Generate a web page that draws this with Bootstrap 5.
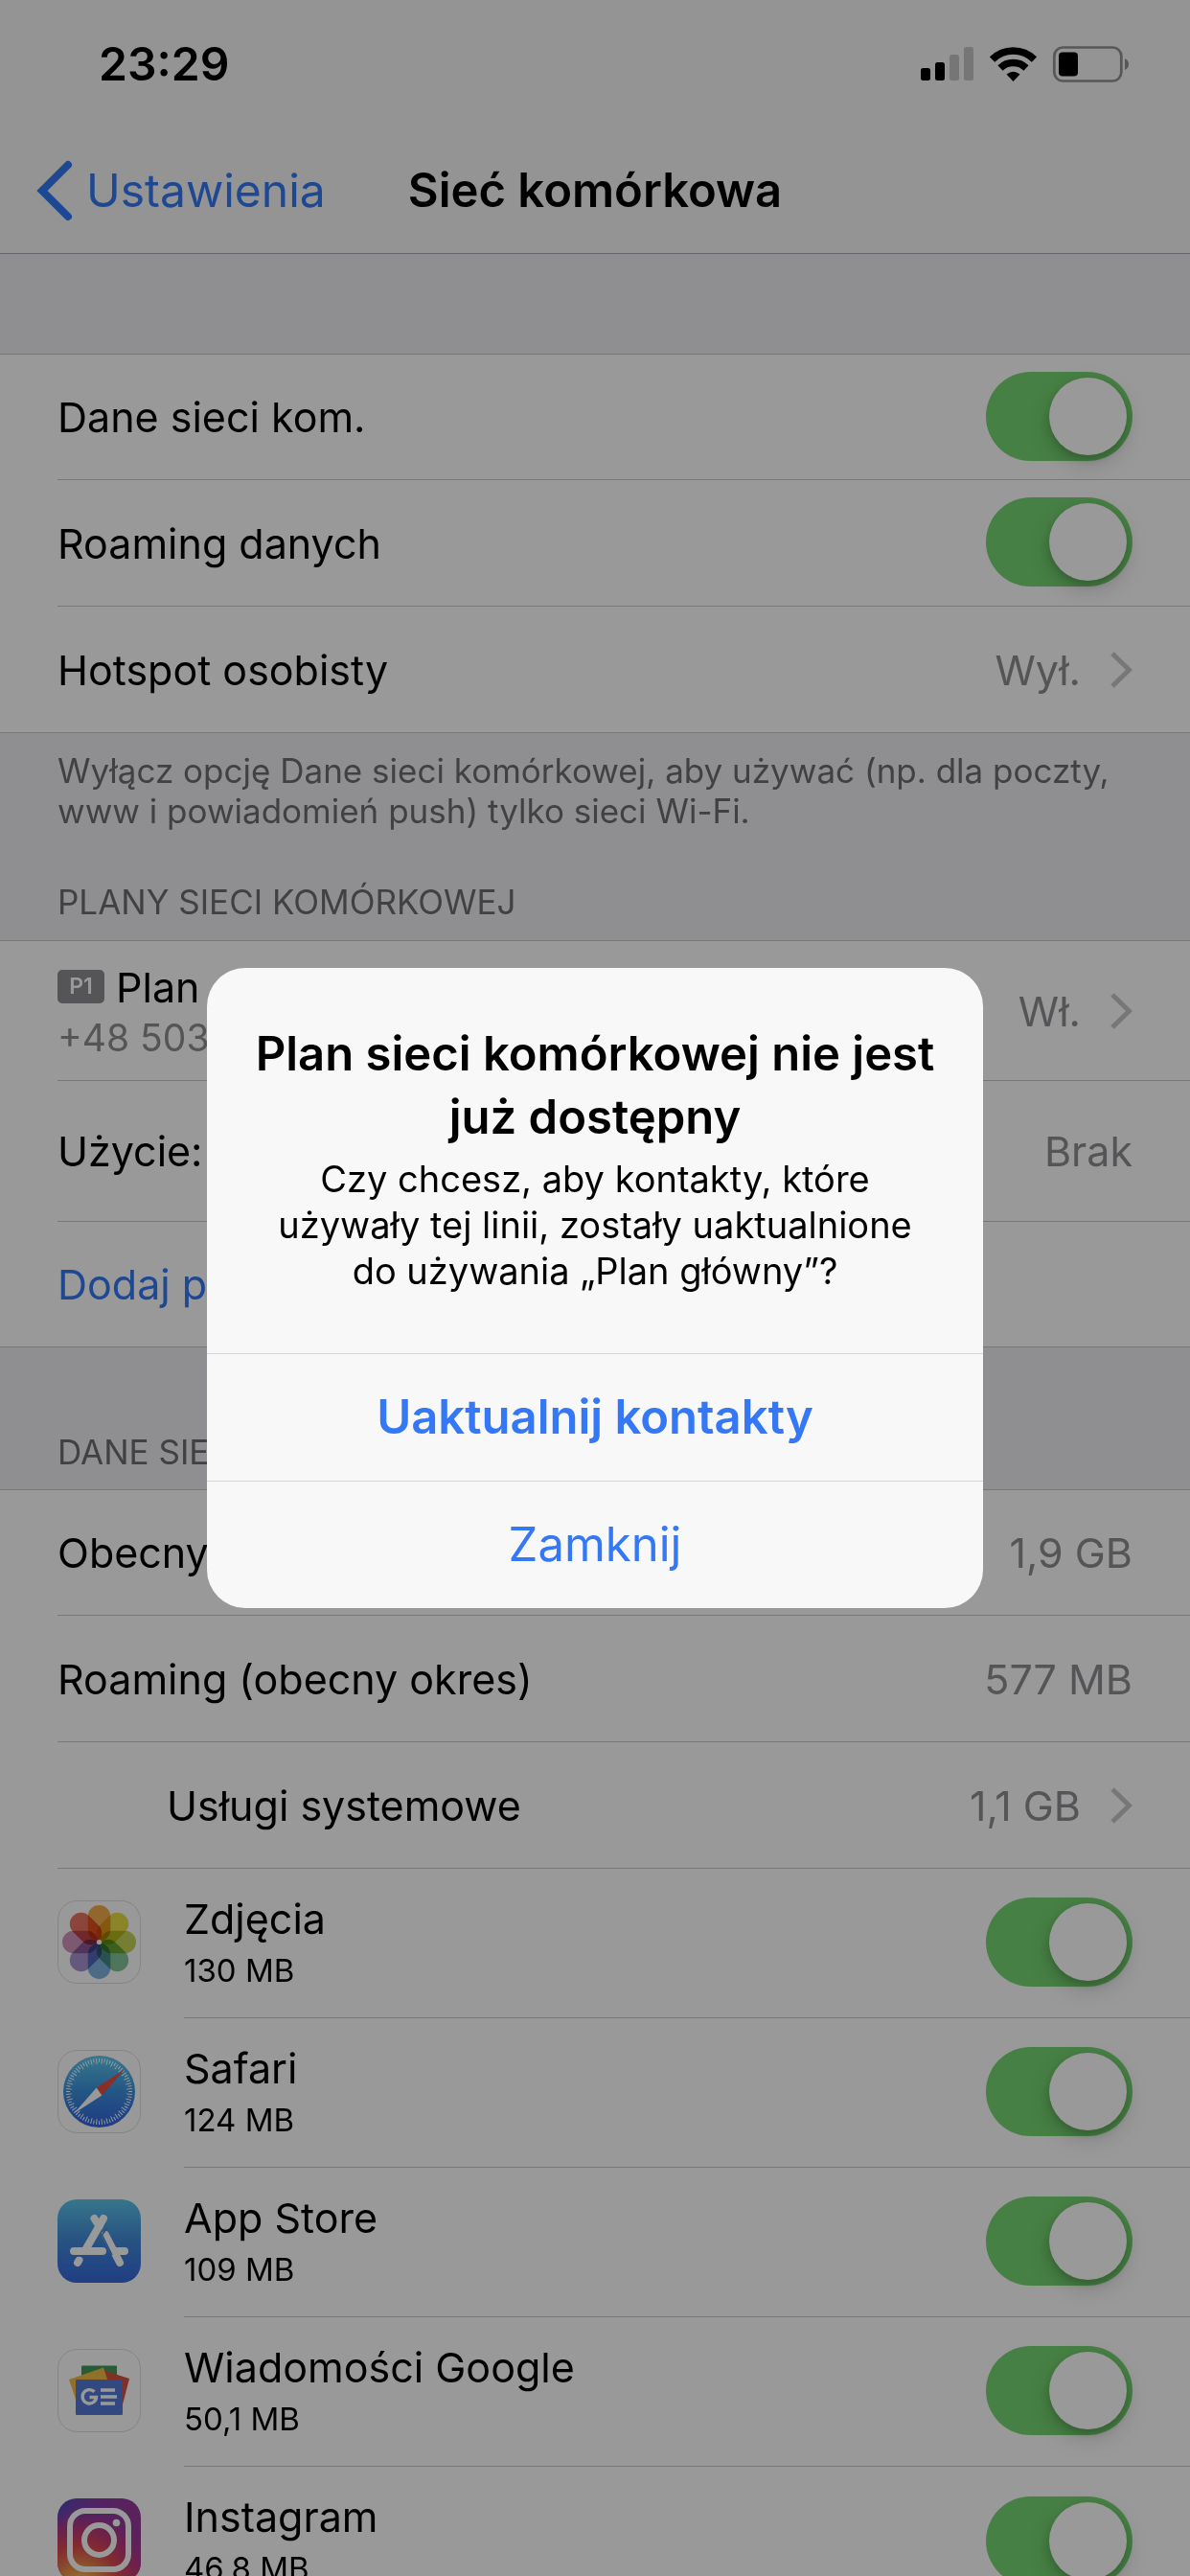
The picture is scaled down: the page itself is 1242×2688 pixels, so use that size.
<!DOCTYPE html>
<html lang="pl">
<head>
<meta charset="utf-8">
<meta name="viewport" content="width=device-width, initial-scale=1">
<title>Sieć komórkowa</title>
<link href="https://cdn.jsdelivr.net/npm/bootstrap@5.3.0/dist/css/bootstrap.min.css" rel="stylesheet">
<style>
  body { font-family: Inter, "Noto Sans", sans-serif; font-size: 43px; line-height: 58px; color: #000; background: #efeff4; }
  a { color: #3478f6; }
  .top-area { background: #f7f7f7; border-bottom: 1px solid #a9a9ad; }
  .status-bar { height: 134px; padding: 0 63px 0 103px; font-size: 48px; }
  .nav-bar { height: 130px; padding: 0 38px; display: grid; grid-template-columns: 1fr auto 1fr; font-size: 49px; }
  .back-link { font-size: 48px; gap: 12px; }
  .spacer-top { height: 104px; }
  .settings-group { --line: #c8c7cc; border-top: 1px solid var(--line); border-bottom: 1px solid var(--line); border-radius: 0; }
  .settings-group > li { background: #fff; padding: 0 0 0 60px; border: 0; color: #000; }
  .cell { min-height: 132px; padding-right: 60px; border-bottom: 1px solid var(--line); }
  .settings-group > li:first-child .cell, .settings-group > li:last-child .cell { min-height: 131px; }
  .settings-group > li:last-child .cell { border-bottom: 0; }
  .settings-group > li .cell.cell-tall { min-height: 147px; }
  .settings-group > li:first-child .cell.cell-tall { min-height: 146px; }
  .settings-group > li:last-child .cell.cell-link { min-height: 130px; }
  .settings-group > li .cell.cell-app { min-height: 156px; padding-bottom: 2px; }
  .cell-indent { padding-left: 114px; }
  .app-icon { width: 87px; height: 87px; margin: 0 45px 3px 0; flex: none; }
  .value-text { color: #8e8e93; }
  .chevron { width: 24px; height: 40px; margin-left: 30px; }
  .phone-text { font-size: 39px; line-height: 48px; padding-bottom: 2px; color: #8e8e93; }
  .size-text { font-size: 33px; line-height: 50px; }
  .plan-badge { width: 49px; height: 35px; border-radius: 5px; background: #8e8e93; color: #fff; font-size: 23px; line-height: 35px; font-weight: 600; margin-right: 12px; }
  .note-text, .section-title { font-size: 35px; line-height: 42px; color: #6d6d72; margin: 0; padding: 18px 60px; font-weight: 400; }
  .section-title { padding-top: 35px; padding-bottom: 19px; }
  .section-title.section-wide { padding-top: 88px; padding-bottom: 18px; }
  .form-switch.ios-switch { padding: 0 0 2px; min-height: 0; margin: 0; line-height: 0; }
  .cell-app .form-switch.ios-switch { padding: 0; }
  .form-switch.ios-switch .form-check-input { position: relative; float: none; width: 153px; height: 93px; margin: 0; border: 0; border-radius: 47px; background: #76d572 none; }
  .ios-switch .form-check-input::before { content: ""; position: absolute; top: 6px; right: 6px; width: 81px; height: 81px; border-radius: 50%; background: #fff; box-shadow: 0 9px 24px rgba(0,0,0,.16), 0 4px 8px rgba(0,0,0,.16); }
  .modal-backdrop.show { opacity: .4; }
  .alert-dialog { max-width: 810px; }
  .alert-dialog .modal-content { background: #f8f8f8; border: 0; border-radius: 40px; overflow: hidden; color: #000; }
  .alert-text { padding: 57px 36px 62px; }
  .alert-text h2 { font-size: 49px; line-height: 66px; font-weight: 600; margin: 0 0 7px; }
  .alert-text p { font-size: 38px; line-height: 48px; margin: 0; padding: 0 24px; }
  .alert-btn { border: 0; border-top: 1px solid #d6d6da; border-radius: 0; height: 133px; font-size: 49px; color: #3478f6; background: transparent; }
</style>
<script src="https://cdn.jsdelivr.net/npm/bootstrap@5.3.0/dist/js/bootstrap.bundle.min.js"></script>
</head>
<body class="overflow-hidden">
<div class="vh-100 overflow-hidden">
  <header class="top-area">
    <div class="status-bar d-flex align-items-center justify-content-between">
      <span class="fw-semibold">23:29</span>
      <div class="d-flex align-items-center">
        <svg width="56" height="36" viewBox="0 0 56 36" aria-hidden="true"><rect y="22" width="10" height="13" rx="2.5"/><rect x="15" y="16" width="10" height="19" rx="2.5"/><g fill="#c5c5c5"><rect x="30" y="8" width="10" height="27" rx="2.5"/><rect x="45" width="10" height="35" rx="2.5"/></g></svg>
        <svg class="ms-3" width="49" height="37" viewBox="0 0 49 37" aria-hidden="true"><g fill="none" stroke="#000" stroke-width="7.500"><path d="M2.600 13A31 31 0 0 1 46.400 13"/><path d="M11 22A19.500 19.500 0 0 1 38 22"/></g><path d="M17.500 28.500Q24.500 23 31.500 28.500L24.500 36Z"/></svg>
        <svg class="ms-3" width="81" height="38" viewBox="0 0 81 38" aria-hidden="true"><rect x="2.300" y="1.500" width="70" height="35" rx="9" fill="none" stroke="#929292" stroke-width="2.700"/><rect x="7" y="6.500" width="20" height="25" rx="4"/><path d="M76 13Q80 15 80 19T76 25Z" fill="#929292"/></svg>
      </div>
    </div>
    <nav class="nav-bar align-items-center">
      <a href="#" class="back-link d-flex align-items-center text-decoration-none"><svg width="40" height="66" viewBox="0 0 40 66" aria-hidden="true"><path d="M33 6L6 33L33 60" fill="none" stroke="#3478f6" stroke-width="8" stroke-linecap="round"/></svg>Ustawienia</a>
      <span class="fw-semibold">Sieć komórkowa</span>
    </nav>
  </header>
  <main>
    <div class="spacer-top"></div>
    <ul class="list-group settings-group">
      <li class="list-group-item"><div class="cell d-flex align-items-center justify-content-between"><label for="s1">Dane sieci kom.</label><div class="form-check form-switch ios-switch"><input class="form-check-input" type="checkbox" role="switch" id="s1" checked></div></div></li>
      <li class="list-group-item"><div class="cell d-flex align-items-center justify-content-between"><label for="s2">Roaming danych</label><div class="form-check form-switch ios-switch"><input class="form-check-input" type="checkbox" role="switch" id="s2" checked></div></div></li>
      <li class="list-group-item"><div class="cell d-flex align-items-center"><span>Hotspot osobisty</span><span class="value-text ms-auto">Wył.</span><svg class="chevron" viewBox="0 0 24 40" aria-hidden="true"><path d="M3 3L20.500 20L3 37" fill="none" stroke="#c7c7cc" stroke-width="5"/></svg></div></li>
    </ul>
    <p class="note-text">Wyłącz opcję Dane sieci komórkowej, aby używać (np. dla poczty, www i powiadomień push) tylko sieci Wi-Fi.</p>
    <h2 class="section-title">PLANY SIECI KOMÓRKOWEJ</h2>
    <ul class="list-group settings-group">
      <li class="list-group-item"><div class="cell cell-tall d-flex align-items-center"><div><div class="d-flex align-items-center"><span class="plan-badge text-center">P1</span>Plan</div><div class="phone-text">+48 503</div></div><span class="value-text ms-auto">Wł.</span><svg class="chevron" viewBox="0 0 24 40" aria-hidden="true"><path d="M3 3L20.500 20L3 37" fill="none" stroke="#c7c7cc" stroke-width="5"/></svg></div></li>
      <li class="list-group-item"><div class="cell cell-tall d-flex align-items-center justify-content-between"><span>Użycie:</span><span class="value-text">Brak</span></div></li>
      <li class="list-group-item"><div class="cell cell-link d-flex align-items-center"><a href="#" class="text-decoration-none">Dodaj p</a></div></li>
    </ul>
    <h2 class="section-title section-wide">DANE SIE</h2>
    <ul class="list-group settings-group">
      <li class="list-group-item"><div class="cell d-flex align-items-center justify-content-between"><span>Obecny</span><span class="value-text">1,9 GB</span></div></li>
      <li class="list-group-item"><div class="cell d-flex align-items-center justify-content-between"><span>Roaming (obecny okres)</span><span class="value-text">577 MB</span></div></li>
      <li class="list-group-item"><div class="cell cell-indent d-flex align-items-center"><span>Usługi systemowe</span><span class="value-text ms-auto">1,1 GB</span><svg class="chevron" viewBox="0 0 24 40" aria-hidden="true"><path d="M3 3L20.500 20L3 37" fill="none" stroke="#c7c7cc" stroke-width="5"/></svg></div></li>
      <li class="list-group-item d-flex align-items-center">
        <svg class="app-icon" viewBox="0 0 87 87" aria-hidden="true">
          <defs><rect id="petal" x="31.700" y="5" width="23.600" height="37.500" rx="11.800"/></defs>
          <rect x=".5" y=".5" width="86" height="86" rx="20" fill="#fff" stroke="#dcdcdc"/>
          <g style="isolation:isolate">
            <g style="mix-blend-mode:multiply" fill="#f2ac4c"><use href="#petal"/></g>
            <g style="mix-blend-mode:multiply" fill="#e6dc48"><use href="#petal" transform="rotate(45 43.500 43.500)"/></g>
            <g style="mix-blend-mode:multiply" fill="#c3d256"><use href="#petal" transform="rotate(90 43.500 43.500)"/></g>
            <g style="mix-blend-mode:multiply" fill="#84c596"><use href="#petal" transform="rotate(135 43.500 43.500)"/></g>
            <g style="mix-blend-mode:multiply" fill="#7fb2e0"><use href="#petal" transform="rotate(180 43.500 43.500)"/></g>
            <g style="mix-blend-mode:multiply" fill="#a795cf"><use href="#petal" transform="rotate(225 43.500 43.500)"/></g>
            <g style="mix-blend-mode:multiply" fill="#cf93bd"><use href="#petal" transform="rotate(270 43.500 43.500)"/></g>
            <g style="mix-blend-mode:multiply" fill="#ea7462"><use href="#petal" transform="rotate(315 43.500 43.500)"/></g>
          </g>
          <circle cx="43.500" cy="43.500" r="2.600" fill="#fff"/>
        </svg>
        <div class="cell cell-app flex-fill d-flex align-items-center justify-content-between"><label for="a1"><span class="d-block">Zdjęcia</span><span class="d-block size-text">130 MB</span></label><div class="form-check form-switch ios-switch"><input class="form-check-input" type="checkbox" role="switch" id="a1" checked></div></div>
      </li>
      <li class="list-group-item d-flex align-items-center">
        <svg class="app-icon" viewBox="0 0 87 87" aria-hidden="true">
          <defs><linearGradient id="gsaf" x2="0" y2="1"><stop stop-color="#5fc8ee"/><stop offset=".5" stop-color="#3b90dc"/><stop offset="1" stop-color="#3462dc"/></linearGradient></defs>
          <rect x=".5" y=".5" width="86" height="86" rx="20" fill="#fff" stroke="#dcdcdc"/>
          <circle cx="43.500" cy="43.500" r="37.500" fill="url(#gsaf)"/>
          <circle cx="43.500" cy="43.500" r="32.500" fill="none" stroke="#fff" stroke-width="4" pathLength="144" stroke-dasharray=".7 3.300" stroke-dashoffset=".35"/>
          <circle cx="43.500" cy="43.500" r="31.500" fill="none" stroke="#fff" stroke-width="6" pathLength="144" stroke-dasharray=".7 3.300" stroke-dashoffset="2.350"/>
          <path d="M70 20.500L40.700 39.500L46.300 47.500Z" fill="#ea4b40"/><path d="M17 66.500L40.700 39.500L46.300 47.500Z" fill="#fff"/>
        </svg>
        <div class="cell cell-app flex-fill d-flex align-items-center justify-content-between"><label for="a2"><span class="d-block">Safari</span><span class="d-block size-text">124 MB</span></label><div class="form-check form-switch ios-switch"><input class="form-check-input" type="checkbox" role="switch" id="a2" checked></div></div>
      </li>
      <li class="list-group-item d-flex align-items-center">
        <svg class="app-icon" viewBox="0 0 87 87" aria-hidden="true">
          <defs><linearGradient id="gapp" x2="0" y2="1"><stop stop-color="#5cc4e8"/><stop offset=".5" stop-color="#4189d8"/><stop offset="1" stop-color="#3668dc"/></linearGradient></defs>
          <rect width="87" height="87" rx="20" fill="url(#gapp)"/>
          <g stroke="#fff" stroke-width="8" fill="none" stroke-linecap="round">
            <path d="M38.500 20L43.500 28M22.500 63.500L21 66M65 66L50 37M17 54H47M62 54H70"/>
            <path d="M48 20L29 53"/>
          </g>
          <path d="M52 30L46.500 37L57 58" fill="none" stroke="#4184d8" stroke-width="1.500"/>
          <path d="M18 59H30" stroke="#3f7ed9" stroke-width="1.500"/>
        </svg>
        <div class="cell cell-app flex-fill d-flex align-items-center justify-content-between"><label for="a3"><span class="d-block">App Store</span><span class="d-block size-text">109 MB</span></label><div class="form-check form-switch ios-switch"><input class="form-check-input" type="checkbox" role="switch" id="a3" checked></div></div>
      </li>
      <li class="list-group-item d-flex align-items-center">
        <svg class="app-icon" viewBox="0 0 87 87" aria-hidden="true">
          <rect x=".5" y=".5" width="86" height="86" rx="20" fill="#fff" stroke="#dcdcdc"/>
          <rect x="25" y="17.500" width="37" height="20" rx="1" fill="#419a5a"/>
          <path d="M50 23L75 31L68 58L50 40Z" fill="#d8513f"/><path d="M12 32L48 19.500L53 35L19.500 54Z" fill="#f0bd42"/>
          <rect x="19" y="32" width="49" height="37" rx="1" fill="#5379d8"/>
          <path d="M38.500 44.800A7.200 7.200 0 1 0 40.500 50.500H33.500" fill="none" stroke="#fff" stroke-width="3.400"/>
          <path d="M45 43H60M45 50H62M45 57H60" stroke="#fff" stroke-width="3.600"/>
        </svg>
        <div class="cell cell-app flex-fill d-flex align-items-center justify-content-between"><label for="a4"><span class="d-block">Wiadomości Google</span><span class="d-block size-text">50,1 MB</span></label><div class="form-check form-switch ios-switch"><input class="form-check-input" type="checkbox" role="switch" id="a4" checked></div></div>
      </li>
      <li class="list-group-item d-flex align-items-center">
        <svg class="app-icon" viewBox="0 0 87 87" aria-hidden="true">
          <defs><linearGradient id="gig" x2="1" y2="0"><stop stop-color="#5548b8"/><stop offset=".5" stop-color="#8a3aa4"/><stop offset="1" stop-color="#983a98"/></linearGradient>
          <radialGradient id="gig2" cx=".27" cy="1.050" r=".98"><stop stop-color="#f5cf78"/><stop offset=".2" stop-color="#ee9a48"/><stop offset=".5" stop-color="#d8474f"/><stop offset=".75" stop-color="#b8357c" stop-opacity=".85"/><stop offset="1" stop-color="#8a3aa4" stop-opacity="0"/></radialGradient></defs>
          <rect width="87" height="87" rx="20" fill="url(#gig)"/><rect width="87" height="87" rx="20" fill="url(#gig2)"/>
          <rect x="13" y="13" width="61" height="61" rx="16" fill="none" stroke="#fff" stroke-width="6"/><circle cx="43.500" cy="43.500" r="15.500" fill="none" stroke="#fff" stroke-width="6"/><circle cx="61.500" cy="25.500" r="3.800" fill="#fff"/>
        </svg>
        <div class="cell cell-app flex-fill d-flex align-items-center justify-content-between"><label for="a5"><span class="d-block">Instagram</span><span class="d-block size-text">46,8 MB</span></label><div class="form-check form-switch ios-switch"><input class="form-check-input" type="checkbox" role="switch" id="a5" checked></div></div>
      </li>
    </ul>
  </main>
</div>
<div class="modal-backdrop show"></div>
<div class="modal d-block" tabindex="-1" role="dialog" aria-modal="true" aria-labelledby="alertTitle">
  <div class="modal-dialog modal-dialog-centered alert-dialog my-0 min-vh-100">
    <div class="modal-content">
      <div class="alert-text text-center">
        <h2 id="alertTitle">Plan sieci komórkowej nie jest już dostępny</h2>
        <p>Czy chcesz, aby kontakty, które używały tej linii, zostały uaktualnione do używania „Plan główny”?</p>
      </div>
      <button type="button" class="btn alert-btn fw-semibold">Uaktualnij kontakty</button>
      <button type="button" class="btn alert-btn">Zamknij</button>
    </div>
  </div>
</div>
</body>
</html>
